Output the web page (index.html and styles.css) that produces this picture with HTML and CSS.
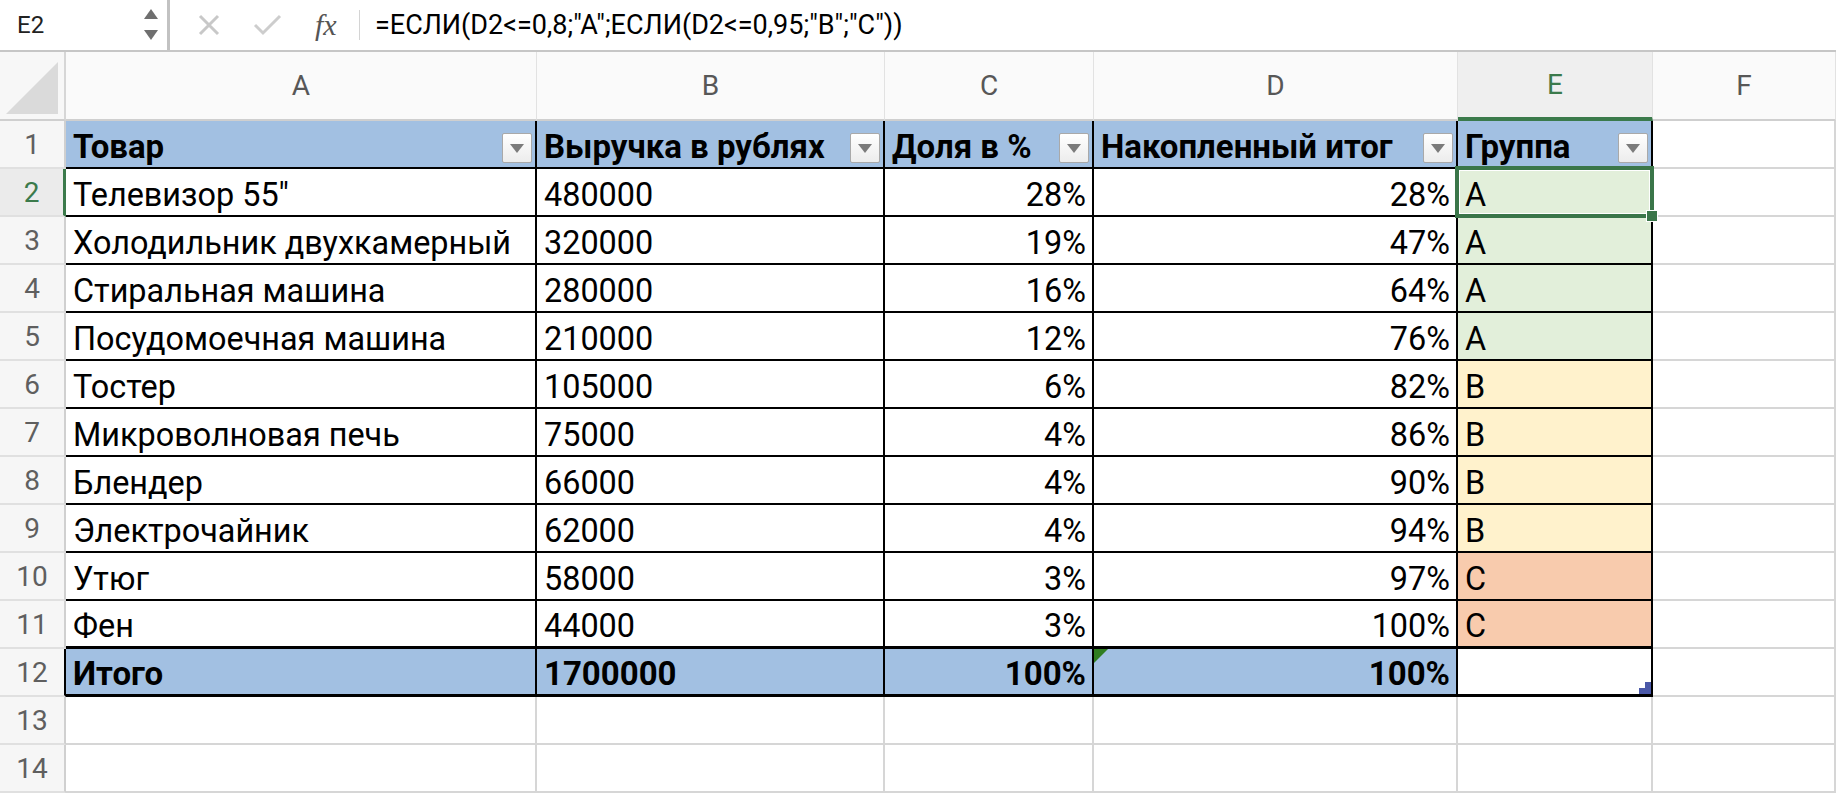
FILE: index.html
```html
<!DOCTYPE html>
<html lang="ru">
<head>
    <meta charset="UTF-8">
    <title>ABC-анализ</title>
    <link rel="stylesheet" href="styles.css">
</head>
<body>
    <div class="formula-bar">
        <div class="name-box">
            <span>E2</span>
            <svg class="spin" width="14" height="32" viewBox="0 0 14 32">
                <polygon points="7,0 14,10 0,10" fill="#6f6f6f"/>
                <polygon points="0,21 14,21 7,31" fill="#6f6f6f"/>
            </svg>
        </div>
        <div class="fb-divider"></div>
        <svg class="icon-x" width="22" height="22" viewBox="0 0 22 22">
            <path d="M2 2 L20 20 M20 2 L2 20" stroke="#c8c8c8" stroke-width="3" fill="none"/>
        </svg>
        <svg class="icon-ok" width="29" height="22" viewBox="0 0 29 22">
            <path d="M2 11 L10 19 L27 2" stroke="#cdcdcd" stroke-width="3" fill="none"/>
        </svg>
        <span class="fx">fx</span>
        <div class="fb-sep"></div>
        <div class="formula">=ЕСЛИ(D2&lt;=0,8;"A";ЕСЛИ(D2&lt;=0,95;"B";"C"))</div>
    </div>

    <div class="sheet">
        <div class="row col-head">
            <div class="corner">
                <svg width="52" height="52" viewBox="0 0 52 52"><polygon points="52,0 52,52 0,52" fill="#dadada"/></svg>
            </div>
            <div class="ch">A</div>
            <div class="ch">B</div>
            <div class="ch">C</div>
            <div class="ch">D</div>
            <div class="ch active">E</div>
            <div class="ch">F</div>
        </div>

        <div class="row">
            <div class="rh">1</div>
            <div class="c t hd">Товар<span class="dd"></span></div>
            <div class="c t hd">Выручка в рублях<span class="dd"></span></div>
            <div class="c t hd">Доля в %<span class="dd"></span></div>
            <div class="c t hd">Накопленный итог<span class="dd"></span></div>
            <div class="c t hd">Группа<span class="dd"></span></div>
            <div class="c"></div>
        </div>

        <div class="row">
            <div class="rh sel-row">2</div>
            <div class="c t">Телевизор 55"</div>
            <div class="c t">480000</div>
            <div class="c t num">28%</div>
            <div class="c t num">28%</div>
            <div class="c t ga">A<span class="sel"></span><span class="handle"></span></div>
            <div class="c"></div>
        </div>

        <div class="row">
            <div class="rh">3</div>
            <div class="c t">Холодильник двухкамерный</div>
            <div class="c t">320000</div>
            <div class="c t num">19%</div>
            <div class="c t num">47%</div>
            <div class="c t ga">A</div>
            <div class="c"></div>
        </div>

        <div class="row">
            <div class="rh">4</div>
            <div class="c t">Стиральная машина</div>
            <div class="c t">280000</div>
            <div class="c t num">16%</div>
            <div class="c t num">64%</div>
            <div class="c t ga">A</div>
            <div class="c"></div>
        </div>

        <div class="row">
            <div class="rh">5</div>
            <div class="c t">Посудомоечная машина</div>
            <div class="c t">210000</div>
            <div class="c t num">12%</div>
            <div class="c t num">76%</div>
            <div class="c t ga">A</div>
            <div class="c"></div>
        </div>

        <div class="row">
            <div class="rh">6</div>
            <div class="c t">Тостер</div>
            <div class="c t">105000</div>
            <div class="c t num">6%</div>
            <div class="c t num">82%</div>
            <div class="c t gb">B</div>
            <div class="c"></div>
        </div>

        <div class="row">
            <div class="rh">7</div>
            <div class="c t">Микроволновая печь</div>
            <div class="c t">75000</div>
            <div class="c t num">4%</div>
            <div class="c t num">86%</div>
            <div class="c t gb">B</div>
            <div class="c"></div>
        </div>

        <div class="row">
            <div class="rh">8</div>
            <div class="c t">Блендер</div>
            <div class="c t">66000</div>
            <div class="c t num">4%</div>
            <div class="c t num">90%</div>
            <div class="c t gb">B</div>
            <div class="c"></div>
        </div>

        <div class="row">
            <div class="rh">9</div>
            <div class="c t">Электрочайник</div>
            <div class="c t">62000</div>
            <div class="c t num">4%</div>
            <div class="c t num">94%</div>
            <div class="c t gb">B</div>
            <div class="c"></div>
        </div>

        <div class="row">
            <div class="rh">10</div>
            <div class="c t">Утюг</div>
            <div class="c t">58000</div>
            <div class="c t num">3%</div>
            <div class="c t num">97%</div>
            <div class="c t gc">C</div>
            <div class="c"></div>
        </div>

        <div class="row before-total">
            <div class="rh">11</div>
            <div class="c t">Фен</div>
            <div class="c t">44000</div>
            <div class="c t num">3%</div>
            <div class="c t num">100%</div>
            <div class="c t gc">C</div>
            <div class="c"></div>
        </div>

        <div class="row total">
            <div class="rh">12</div>
            <div class="c t tot">Итого</div>
            <div class="c t tot">1700000</div>
            <div class="c t tot num">100%</div>
            <div class="c t tot num"><span class="err"></span>100%</div>
            <div class="c t"><svg class="resize" width="12" height="12" viewBox="0 0 12 12"><polygon points="6,0 12,0 12,12 0,12 0,6 6,6" fill="#4a58a8"/></svg></div>
            <div class="c"></div>
        </div>

        <div class="row">
            <div class="rh">13</div>
            <div class="c"></div>
            <div class="c"></div>
            <div class="c"></div>
            <div class="c"></div>
            <div class="c"></div>
            <div class="c"></div>
        </div>

        <div class="row">
            <div class="rh">14</div>
            <div class="c"></div>
            <div class="c"></div>
            <div class="c"></div>
            <div class="c"></div>
            <div class="c"></div>
            <div class="c"></div>
        </div>
    </div>
</body>
</html>
```

FILE: styles.css
```css
* {
    margin: 0;
    padding: 0;
    box-sizing: border-box;
}

body {
    font-family: Roboto, "Liberation Sans", sans-serif;
    background-color: #fff;
    color: #000;
    width: 1836px;
    height: 793px;
    overflow: hidden;
}

/* formula bar */

.formula-bar {
    height: 52px;
    display: flex;
    align-items: center;
    border-bottom: 2px solid #c6c6c6;
    background-color: #fff;
}

.name-box {
    width: 167px;
    height: 50px;
    display: flex;
    align-items: center;
    justify-content: space-between;
    padding: 0 9px 0 17px;
    font-size: 24px;
    color: #222;
}

.fb-divider {
    width: 3px;
    height: 50px;
    background-color: #c2c2c2;
}

.icon-x {
    margin-left: 28px;
}

.icon-ok {
    margin-left: 33px;
}

.fx {
    margin-left: 33px;
    font-family: "Liberation Serif", serif;
    font-style: italic;
    font-size: 30px;
    color: #555;
    width: 27px;
    line-height: 30px;
}

.fb-sep {
    margin-left: 17px;
    width: 1px;
    height: 30px;
    background-color: #d4d4d4;
}

.formula {
    margin-left: 15px;
    font-size: 27px;
    white-space: nowrap;
}

/* sheet grid */

.row {
    display: grid;
    grid-template-columns: 66px 471px 348px 209px 364px 195px 183px;
    height: 48px;
}

.col-head {
    height: 69px;
}

.corner {
    background-color: #f7f7f7;
    border-right: 2px solid #d6d6d6;
    border-bottom: 2px solid #cfcfcf;
    display: flex;
    align-items: flex-end;
    justify-content: flex-end;
    padding: 0 6px 5px 0;
}

.ch {
    background-color: #fafafa;
    border-right: 1px solid #e2e2e2;
    border-bottom: 2px solid #cfcfcf;
    display: flex;
    align-items: center;
    justify-content: center;
    font-size: 28px;
    color: #575757;
}

.ch.active {
    background-color: #efefef;
    color: #3b7a4b;
    border-bottom: 4px solid #3b7a4b;
}

.rh {
    background-color: #f6f6f6;
    border-right: 2px solid #d0d0d0;
    border-bottom: 2px solid #e0e0e0;
    display: flex;
    align-items: center;
    justify-content: center;
    font-size: 28px;
    color: #5f5f5f;
}

.rh.sel-row {
    background-color: #ebebeb;
    color: #3b7a4b;
    border-right: 3px solid #3b7a4b;
}

.c {
    position: relative;
    display: flex;
    align-items: flex-end;
    padding: 0 7px 2px 7px;
    border-right: 2px solid #d6d6d6;
    border-bottom: 2px solid #d6d6d6;
    font-size: 32.4px;
    line-height: 36px;
    white-space: nowrap;
}

.t {
    border-right-color: #000;
    border-bottom-color: #000;
}

.num {
    justify-content: flex-end;
    padding-right: 6px;
}

.hd {
    background-color: #a2c0e2;
    font-weight: 700;
    font-size: 33px;
    padding-right: 3px;
}

.dd {
    flex: none;
    width: 30px;
    height: 30px;
    margin: 0 0 2px auto;
    border: 1px solid #a9a9a9;
    border-radius: 2px;
    background: linear-gradient(#ffffff, #ececec);
    display: flex;
    align-items: center;
    justify-content: center;
}

.dd::after {
    content: "";
    border-left: 7px solid transparent;
    border-right: 7px solid transparent;
    border-top: 9px solid #7b7b7b;
}

.ga {
    background-color: #e2efda;
}

.gb {
    background-color: #fff2cc;
}

.gc {
    background-color: #f8cbad;
}

.before-total .t {
    border-bottom-width: 3px;
}

.total .t {
    border-bottom-width: 3px;
}

.total .rh {
    border-right-color: #000;
}

.tot {
    background-color: #a2c0e2;
    font-weight: 700;
    font-size: 33px;
}

/* selection on E2 */

.sel {
    position: absolute;
    left: -3px;
    top: -3px;
    right: -3px;
    bottom: -3px;
    border: 4px solid #3a7649;
    box-shadow: inset 0 0 0 1px #fff;
    z-index: 2;
}

.handle {
    position: absolute;
    right: -7px;
    bottom: -7px;
    width: 12px;
    height: 12px;
    background-color: #3a7649;
    border: 1px solid #fff;
    z-index: 3;
}

.err {
    position: absolute;
    left: 0;
    top: 0;
    border-top: 14px solid #2f7d21;
    border-right: 14px solid transparent;
}

.resize {
    position: absolute;
    right: 0;
    bottom: 0;
}
```
